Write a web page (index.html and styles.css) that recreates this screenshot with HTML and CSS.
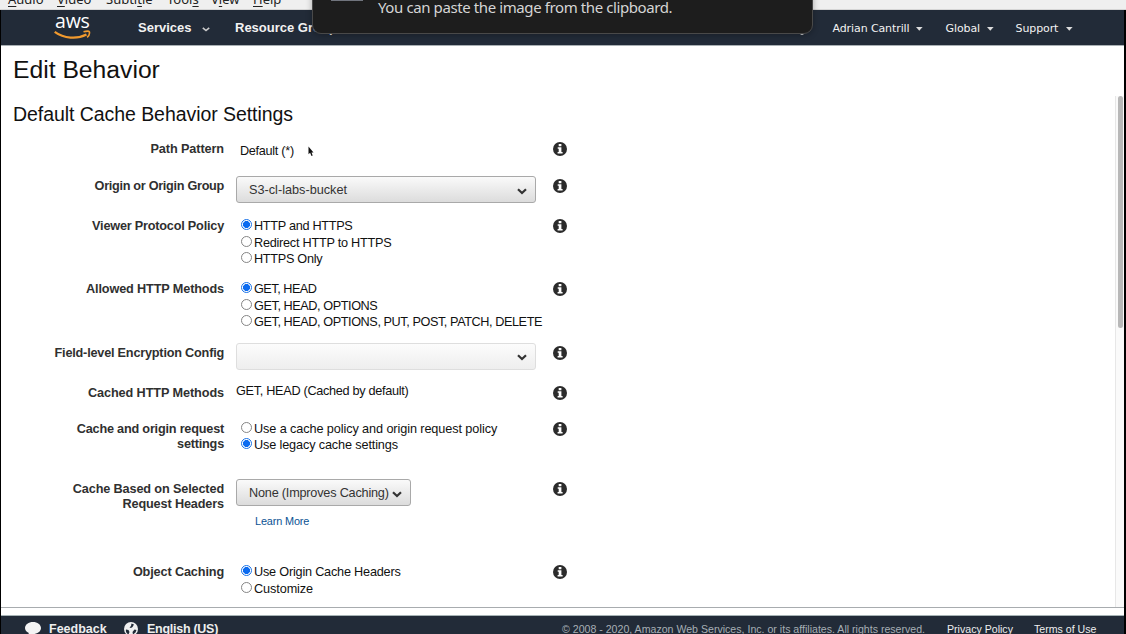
FILE: index.html
```html
<!DOCTYPE html>
<html lang="en">
<head>
<meta charset="utf-8">
<title>Edit Behavior</title>
<link rel="stylesheet" href="styles.css">
</head>
<body>
<svg class="defs" width="0" height="0">
  <symbol id="info" viewBox="0 0 14 14"><circle cx="7" cy="7" r="7" fill="#2b2b2b"/><path d="M5.700 2h2.700v2.300H5.700zM4.700 5.200h3.700v4.700h1.200v1.600H4.600V9.900h1.100V6.700h-1z" fill="#fff"/></symbol>
  <symbol id="chev" viewBox="0 0 10 7"><path d="M1 1.300 5 5.100 9 1.300" fill="none" stroke="#333" stroke-width="2.200"/></symbol>
  <symbol id="tri" viewBox="0 0 7 4"><path d="M0 0h6.600L3.300 3.800z" fill="#ddd"/></symbol>
</svg>
<div class="menubar">
  <span class="m1"><u>A</u>udio</span><span class="m2"><u>V</u>ideo</span><span class="m3">Subti<u>t</u>le</span><span class="m4">Tool<u>s</u></span><span class="m5">V<u>i</u>ew</span><span class="m6"><u>H</u>elp</span>
</div>
<div class="window">
  <header class="nav">
    <div class="logo"><span class="aws">aws</span>
      <svg class="smile" width="38" height="10" viewBox="0 0 38 10"><path d="M.7 1.800C10 8.600 23 9.400 32.500 4.500" fill="none" stroke="#f29a2e" stroke-width="2.200"/><path d="M29.500 1.800c3-.8 5.500-.7 5.900.1.300 1.200-.5 3.800-2.300 5.400" fill="none" stroke="#f29a2e" stroke-width="1.600"/></svg>
    </div>
    <div class="services">Services</div>
    <svg class="svc-chev" width="8" height="5" viewBox="0 0 8 5"><path d="M.8.8 4 3.500 7.200.8" fill="none" stroke="#ccc" stroke-width="1.600"/></svg>
    <div class="groups">Resource Groups</div>
    <svg class="bell" width="14" height="16" viewBox="0 0 14 16"><path d="M1 12c2-2 2-4 2-6a4 4 0 0 1 8 0c0 2 0 4 2 6zM5 13h4a2 2 0 0 1-4 0z" fill="#ddd"/></svg>
    <div class="acct user"><span>Adrian Cantrill</span><svg width="7" height="4"><use href="#tri"/></svg></div>
    <div class="acct region"><span>Global</span><svg width="7" height="4"><use href="#tri"/></svg></div>
    <div class="acct support"><span>Support</span><svg width="7" height="4"><use href="#tri"/></svg></div>
  </header>
  <main class="main">
    <h1>Edit Behavior</h1>
    <div class="scroll">
      <div class="content">
        <h2>Default Cache Behavior Settings</h2>
        <div class="form">
          <div class="row r-path"><div class="label t1">Path Pattern</div><div class="field plain indent t3">Default (*)</div><svg class="info"><use href="#info"/></svg></div>
          <div class="row r-origin"><div class="label t3">Origin or Origin Group</div><div class="field"><div class="select"><span>S3-cl-labs-bucket</span><svg width="10" height="7"><use href="#chev"/></svg></div></div><svg class="info"><use href="#info"/></svg></div>
          <div class="row r-viewer"><div class="label t2">Viewer Protocol Policy</div><div class="field radios">
            <label class="t3"><i class="on"></i>HTTP and HTTPS</label><label class="t25"><i></i>Redirect HTTP to HTTPS</label><label class="t3"><i></i>HTTPS Only</label></div><svg class="info"><use href="#info"/></svg></div>
          <div class="row r-allowed"><div class="label t15">Allowed HTTP Methods</div><div class="field radios">
            <label class="t5"><i class="on"></i>GET, HEAD</label><label class="t4"><i></i>GET, HEAD, OPTIONS</label><label class="t4"><i></i>GET, HEAD, OPTIONS, PUT, POST, PATCH, DELETE</label></div><svg class="info"><use href="#info"/></svg></div>
          <div class="row r-field"><div class="label t2">Field-level Encryption Config</div><div class="field"><div class="select off"><span></span><svg width="10" height="7"><use href="#chev"/></svg></div></div><svg class="info"><use href="#info"/></svg></div>
          <div class="row r-cached"><div class="label t1">Cached HTTP Methods</div><div class="field plain up t3">GET, HEAD (Cached by default)</div><svg class="info"><use href="#info"/></svg></div>
          <div class="row r-policy"><div class="label t2">Cache and origin request<br>settings</div><div class="field radios">
            <label class="t1"><i></i>Use a cache policy and origin request policy</label><label class="t15"><i class="on"></i>Use legacy cache settings</label></div><svg class="info"><use href="#info"/></svg></div>
          <div class="row r-headers"><div class="label t15">Cache Based on Selected<br>Request Headers</div><div class="field"><div class="select small t2"><span>None (Improves Caching)</span><svg width="10" height="7"><use href="#chev"/></svg></div><a class="more">Learn More</a></div><svg class="info"><use href="#info"/></svg></div>
          <div class="row r-object"><div class="label t15">Object Caching</div><div class="field radios">
            <label class="t2"><i class="on"></i>Use Origin Cache Headers</label><label class="t1"><i></i>Customize</label></div><svg class="info"><use href="#info"/></svg></div>
        </div>
      </div>
      <div class="track"><div class="thumb"></div></div>
    </div>
  </main>
  <footer class="footer">
    <svg class="bubble" width="16" height="15" viewBox="0 0 16 15"><path d="M8 1c4.400 0 8 2.600 8 6s-3.600 6-8 6l-5 2 .8-3C1.500 11 0 9.200 0 7c0-3.400 3.600-6 8-6z" fill="#f4f4f4"/></svg>
    <b class="feedback">Feedback</b>
    <svg class="globe" width="14" height="14" viewBox="0 0 14 14"><circle cx="7" cy="7" r="7" fill="#f0f0f0"/><path d="M7.500 1.500 10 2.500 8.500 5 7 6 5.500 5.500 7 4zM2 7.500 4.500 8l1 2-1 2.500C2.500 11.500 1.500 9.500 2 7.500zM10.500 7.500l2 .5-1 2.500L9 12.500 8.500 10z" fill="#222b38"/></svg>
    <b class="lang">English (US)</b>
    <span class="copy">© 2008 - 2020, Amazon Web Services, Inc. or its affiliates. All rights reserved.</span>
    <span class="privacy">Privacy Policy</span>
    <span class="terms">Terms of Use</span>
  </footer>
</div>
<div class="notice"><div class="thumbnail"></div><span>You can paste the image from the clipboard.</span></div>
<svg class="cursor" width="6" height="11" viewBox="0 0 6 11"><path d="M.5.500v7.700l1.600-1.400L3.500 10l1.200-.6-1.200-3h2z" fill="#111"/></svg>
</body>
</html>
```
FILE: styles.css
```css
* { box-sizing: border-box; }
html, body { margin: 0; width: 1126px; height: 634px; overflow: hidden; }
body { position: relative; background: #000; color: #111; font-family: "Liberation Sans", Arial, sans-serif; font-size: 12.7px; white-space: nowrap; display: flex; flex-direction: column; }
.defs { position: absolute; }
svg { display: block; flex: none; }

/* letter-spacing steps */
.t1 { letter-spacing: -.1px; }
.t15 { letter-spacing: -.14px; }
.t2 { letter-spacing: -.21px; }
.t25 { letter-spacing: -.25px; }
.t3 { letter-spacing: -.3px; }
.t4 { letter-spacing: -.43px; }
.t5 { letter-spacing: -.5px; }

.menubar { height: 10px; flex: none; background: #efefef; border-bottom: 1px solid #d5d5d5; overflow: hidden; display: flex; padding-left: 8px; color: #222; font: 13px/18px "Noto Sans", sans-serif; }
.menubar span { flex: none; margin-top: -10px; height: 18px; }
.menubar u { text-underline-offset: 2px; }
.m1 { width: 49px; } .m2 { width: 49px; } .m3 { width: 61px; } .m4 { width: 44px; } .m5 { width: 42px; }

.window { margin: 0 2px 0 1px; height: 624px; display: flex; flex-direction: column; background: #fff; }
.nav { height: 36px; flex: none; background: #222b38; border-bottom: 1px solid #a9b0b4; display: flex; color: #f2f2f2; }
.logo { width: 38px; margin-left: 53px; padding-top: 3px; }
.aws { display: block; height: 17px; padding-left: 1px; font: 500 19.500px/16px "Open Sans", sans-serif; letter-spacing: -.2px; color: #fff; }
.services, .groups { font-weight: bold; font-size: 13px; line-height: 36px; }
.services { width: 54px; margin-left: 46px; }
.svc-chev { margin: 16.500px 0 0 10px; }
.groups { width: 110px; margin-left: 25px; }
.bell { margin: 10px 0 0 450px; }
.acct { display: flex; font: 11px/36px "DejaVu Sans", Verdana, sans-serif; letter-spacing: -.1px; padding-top: 1px; }
.acct svg { margin: 16px 0 0 auto; }
.user { width: 90px; margin-left: 23.500px; }
.region { width: 48px; margin-left: 23px; }
.support { width: 57px; margin-left: 22px; }

.main { height: 562px; flex: none; border-bottom: 1px solid #a8acaf; }
h1, h2 { margin: 0; font-weight: normal; color: #111; }
h1 { height: 50px; padding: 9px 0 0 12px; font-size: 24.700px; line-height: 29px; }
.scroll { height: 511px; display: flex; }
.content { flex: 1; }
h2 { height: 45px; padding: 6px 0 0 12px; font-size: 19.500px; letter-spacing: -.06px; line-height: 24px; }
.track { width: 9px; background: #fafafa; border-left: 1px solid #e7e7e7; padding: 0 2px; }
.thumb { height: 232px; width: 5px; border-radius: 3px; background: #b8b8b8; }

.row { display: grid; grid-template-columns: 223px 305px 14px; column-gap: 12px; align-items: start; }
.info { width: 14px; height: 14px; margin-top: 1px; }
.label { margin-top: 1px; text-align: right; font-weight: bold; font-size: 12.700px; line-height: 15px; color: #303030; }
.r-path { height: 37px; } .r-origin { height: 40px; } .r-viewer { height: 63px; } .r-allowed { height: 63.500px; }
.r-field { height: 40.500px; } .r-cached { height: 36px; } .r-policy { height: 60px; } .r-headers { height: 83px; } .r-object { height: 40px; }
.plain { line-height: 17px; }
.indent { padding: 2px 0 0 4px; }
.up { margin-top: -2px; }
.radios { display: flex; flex-direction: column; padding-left: 5px; }
.radios label { height: 16.500px; line-height: 17px; display: flex; align-items: flex-start; }
.radios i { flex: none; width: 11px; height: 11px; margin: 1px 2px 0 0; border: 1px solid #858585; border-radius: 50%; background: #fff; }
.radios i.on { border-color: #1a73e8; background: radial-gradient(circle, #0b6bf0 0 3.200px, #fff 3.800px); }
.r-policy .radios { margin-top: -.5px; }
.select { width: 299.500px; height: 27px; margin-top: -2px; padding: 0 8px 0 12px; display: flex; align-items: center; justify-content: space-between; border: 1px solid #a9a9a9; border-radius: 3px; background: linear-gradient(#fafafa, #dcdcdc); color: #333; }
.select svg { margin-top: 3px; }
.select.off { border-color: #dedede; background: linear-gradient(#fcfcfc, #eee); }
.select.small { width: 175px; }
.more { display: block; margin: 8px 0 0 19px; font-size: 10.900px; letter-spacing: -.15px; line-height: 14px; color: #0c5394; }

.footer { height: 19px; flex: none; margin-top: 7px; background: #222b38; border-top: 1px solid #a6b3b5; overflow: hidden; display: flex; line-height: 26px; font-size: 10.600px; color: #eee; }
.footer b { font-size: 12.500px; }
.bubble { margin: 5px 8px 0 24px; }
.feedback { width: 58px; }
.globe { margin: 6px 9px 0 17px; }
.lang { width: 71px; letter-spacing: -.27px; }
.copy { width: 365px; margin-left: 344px; color: #a7afb5; }
.privacy { width: 67px; margin-left: 20px; }
.terms { margin-left: 20px; }

.notice { position: absolute; left: 312px; top: -20px; width: 501px; height: 54px; padding: 17px 0 0 18px; display: flex; background: #1d1d1d; border: 1px solid #494949; border-radius: 9px; box-shadow: 0 1px 6px rgba(0,0,0,.3); color: #d5d5d5; font: 15px/18px "Noto Sans", sans-serif; letter-spacing: -.4px; }
.thumbnail { width: 32px; height: 3px; margin-right: 15px; border-bottom: 1px solid #70747d; }
.cursor { position: absolute; left: 308px; top: 146px; }
```
